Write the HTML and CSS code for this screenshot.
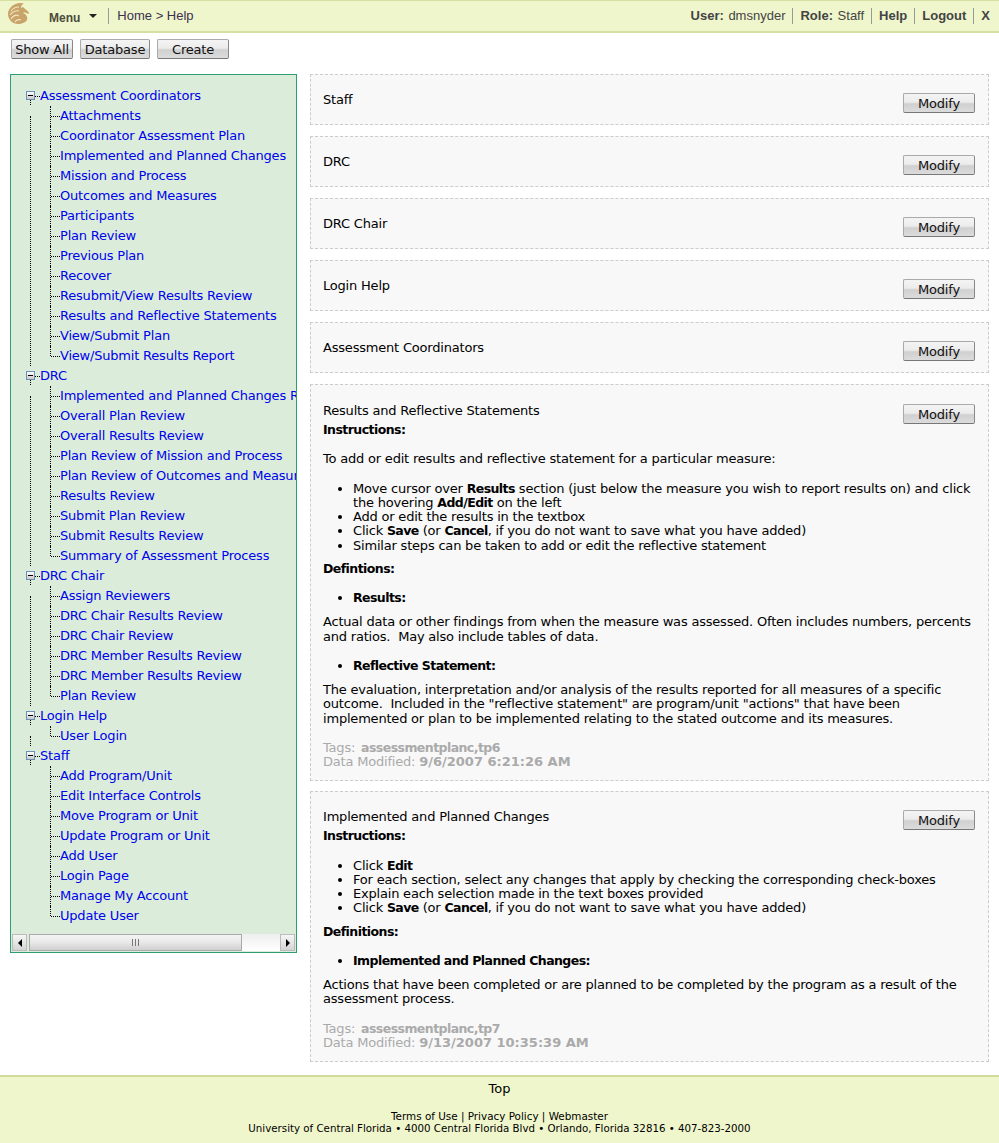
FILE: index.html
```html
<!DOCTYPE html>
<html lang="en">
<head>
  <meta charset="UTF-8">
  <meta name="viewport" content="width=device-width, initial-scale=1.0">
  <title>Help</title>
  <link rel="stylesheet" href="styles.css">
</head>
<body>
  <header class="topbar">
    <div class="topbar-left">
      <svg class="logo" width="21" height="21" viewBox="0 0 21 21">
        <path d="M12 0C6 0 0 5 0 11c0 6 5 10 10 10 4 0 8-2 9-4 1-3-1-6-4-7 1-1 2-1 3 0l3 1c0-2-2-4-4-5-1-2-3-2-4-1 0-2 1-4 3-4-1-1-3-1-4-1z" fill="#c8a468"/>
        <path d="M3 8c2-3 5-4 8-4M2 12c2-3 6-5 9-4M3 16c2-3 5-5 8-3M7 19c1-2 4-3 6-2" fill="none" stroke="#f0e4c4" stroke-width="1.1"/>
      </svg>
      <span class="menu">Menu</span>
      <span class="menu-arrow"></span>
      <span class="crumbs">Home &gt; Help</span>
    </div>
    <div class="topbar-right">
      <span class="top-item"><b>User:</b> dmsnyder</span>
      <span class="top-item"><b>Role:</b> Staff</span>
      <span class="top-item"><b>Help</b></span>
      <span class="top-item"><b>Logout</b></span>
      <span class="top-item"><b>X</b></span>
    </div>
  </header>

  <div class="toolbar">
    <button class="btn btn-showall">Show All</button>
    <button class="btn btn-database">Database</button>
    <button class="btn btn-create">Create</button>
  </div>

  <main class="content">
    <nav class="side">
      <div class="tree-scroll">
        <ul class="tree">
          <li class="root"><span class="toggle"></span><a>Assessment Coordinators</a>
            <ul>
              <li><a>Attachments</a></li>
              <li><a>Coordinator Assessment Plan</a></li>
              <li><a>Implemented and Planned Changes</a></li>
              <li><a>Mission and Process</a></li>
              <li><a>Outcomes and Measures</a></li>
              <li><a>Participants</a></li>
              <li><a>Plan Review</a></li>
              <li><a>Previous Plan</a></li>
              <li><a>Recover</a></li>
              <li><a>Resubmit/View Results Review</a></li>
              <li><a>Results and Reflective Statements</a></li>
              <li><a>View/Submit Plan</a></li>
              <li><a>View/Submit Results Report</a></li>
            </ul>
          </li>
          <li class="root"><span class="toggle"></span><a>DRC</a>
            <ul>
              <li><a>Implemented and Planned Changes Review</a></li>
              <li><a>Overall Plan Review</a></li>
              <li><a>Overall Results Review</a></li>
              <li><a>Plan Review of Mission and Process</a></li>
              <li><a>Plan Review of Outcomes and Measures</a></li>
              <li><a>Results Review</a></li>
              <li><a>Submit Plan Review</a></li>
              <li><a>Submit Results Review</a></li>
              <li><a>Summary of Assessment Process</a></li>
            </ul>
          </li>
          <li class="root"><span class="toggle"></span><a>DRC Chair</a>
            <ul>
              <li><a>Assign Reviewers</a></li>
              <li><a>DRC Chair Results Review</a></li>
              <li><a>DRC Chair Review</a></li>
              <li><a>DRC Member Results Review</a></li>
              <li><a>DRC Member Results Review</a></li>
              <li><a>Plan Review</a></li>
            </ul>
          </li>
          <li class="root"><span class="toggle"></span><a>Login Help</a>
            <ul>
              <li><a>User Login</a></li>
            </ul>
          </li>
          <li class="root"><span class="toggle"></span><a>Staff</a>
            <ul>
              <li><a>Add Program/Unit</a></li>
              <li><a>Edit Interface Controls</a></li>
              <li><a>Move Program or Unit</a></li>
              <li><a>Update Program or Unit</a></li>
              <li><a>Add User</a></li>
              <li><a>Login Page</a></li>
              <li><a>Manage My Account</a></li>
              <li><a>Update User</a></li>
            </ul>
          </li>
        </ul>
      </div>
      <div class="hscroll">
        <span class="sb-btn"><span class="arrow-left"></span></span>
        <span class="sb-thumb"><span class="grip"></span></span>
        <span class="sb-track"></span>
        <span class="sb-btn"><span class="arrow-right"></span></span>
      </div>
    </nav>

    <section class="cards">
      <article class="card card-short"><button class="btn btn-modify">Modify</button><div class="card-title">Staff</div></article>
      <article class="card card-short"><button class="btn btn-modify">Modify</button><div class="card-title">DRC</div></article>
      <article class="card card-short"><button class="btn btn-modify">Modify</button><div class="card-title">DRC Chair</div></article>
      <article class="card card-short"><button class="btn btn-modify">Modify</button><div class="card-title">Login Help</div></article>
      <article class="card card-short"><button class="btn btn-modify">Modify</button><div class="card-title">Assessment Coordinators</div></article>

      <article class="card card-long">
        <button class="btn btn-modify">Modify</button>
        <div class="card-title">Results and Reflective Statements</div>
        <p><b>Instructions:</b></p>
        <p class="gap">To add or edit results and reflective statement for a particular measure:</p>
        <ul class="list list-steps">
          <li>Move cursor over <b>Results</b> section (just below the measure you wish to report results on) and click the hovering <b>Add/Edit</b> on the left</li>
          <li>Add or edit the results in the textbox</li>
          <li>Click <b>Save</b> (or <b>Cancel</b>, if you do not want to save what you have added)</li>
          <li>Similar steps can be taken to add or edit the reflective statement</li>
        </ul>
        <p><b>Defintions:</b></p>
        <ul class="list">
          <li><b>Results:</b></li>
        </ul>
        <p>Actual data or other findings from when the measure was assessed. Often includes numbers, percents and ratios.&nbsp; May also include tables of data.</p>
        <ul class="list">
          <li><b>Reflective Statement:</b></li>
        </ul>
        <p>The evaluation, interpretation and/or analysis of the results reported for all measures of a specific outcome.&nbsp; Included in the "reflective statement" are program/unit "actions" that have been implemented or plan to be implemented relating to the stated outcome and its measures.</p>
        <div class="meta">Tags: <b class="tag">assessmentplanc,tp6</b><br>Data Modified: <b class="date">9/6/2007 6:21:26 AM</b></div>
      </article>

      <article class="card card-long card-changes">
        <button class="btn btn-modify">Modify</button>
        <div class="card-title">Implemented and Planned Changes</div>
        <p><b>Instructions:</b></p>
        <ul class="list list-steps">
          <li>Click <b>Edit</b></li>
          <li>For each section, select any changes that apply by checking the corresponding check-boxes</li>
          <li>Explain each selection made in the text boxes provided</li>
          <li>Click <b>Save</b> (or <b>Cancel</b>, if you do not want to save what you have added)</li>
        </ul>
        <p><b>Definitions:</b></p>
        <ul class="list">
          <li><b>Implemented and Planned Changes:</b></li>
        </ul>
        <p>Actions that have been completed or are planned to be completed by the program as a result of the assessment process.</p>
        <div class="meta">Tags: <b class="tag">assessmentplanc,tp7</b><br>Data Modified: <b class="date">9/13/2007 10:35:39 AM</b></div>
      </article>
    </section>
  </main>

  <footer class="footer">
    <div class="top-link">Top</div>
    <div class="footer-links">Terms of Use | Privacy Policy | Webmaster</div>
    <div class="footer-addr">University of Central Florida &bull; 4000 Central Florida Blvd &bull; Orlando, Florida 32816 &bull; 407-823-2000</div>
  </footer>
</body>
</html>
```

FILE: styles.css
```css
body {
  margin: 0;
  font-family: "DejaVu Sans", Verdana, sans-serif;
  font-size: 12px;
  color: #000;
  background: #fff;
}

.topbar {
  display: flex;
  justify-content: space-between;
  height: 30px;
  background: #eff6cc;
  border-top: 1px solid #d6e0a0;
  border-bottom: 2px solid #d6e0a0;
  font-family: "Liberation Sans", Arial, sans-serif;
  font-size: 13px;
  color: #444;
}

.topbar-left {
  display: flex;
  align-items: center;
}

.logo {
  margin: 0 0 6px 8px;
}

.menu {
  margin: 3px 0 0 20px;
  font-size: 12px;
  font-weight: bold;
  color: #4a4a3a;
}

.menu-arrow {
  width: 0;
  height: 0;
  margin-left: 9px;
  border-left: 4px solid transparent;
  border-right: 4px solid transparent;
  border-top: 4px solid #222;
}

.crumbs {
  margin-left: 11px;
  padding-left: 8px;
  border-left: 1px solid #999;
  line-height: 16px;
  color: #3c2f50;
}

.topbar-right {
  display: flex;
  align-items: center;
  padding-right: 2px;
}

.top-item {
  padding: 0 7px;
  border-left: 1px solid #999;
  line-height: 16px;
  word-spacing: 1px;
}

.top-item:first-child {
  border-left: none;
}

.toolbar {
  display: flex;
  gap: 7px;
  padding: 6px 0 0 11px;
}

.btn {
  height: 20px;
  padding: 0;
  font-family: "DejaVu Sans", Verdana, sans-serif;
  font-size: 13px;
  letter-spacing: -0.2px;
  color: #111;
  background: linear-gradient(#f4f4f4, #ececec 45%, #d0d0d0 55%, #dcdcdc);
  border: 1px solid #aaa;
  border-right-color: #888;
  border-bottom-color: #777;
  border-radius: 2px;
}

.btn-showall {
  width: 62px;
}

.btn-database {
  width: 70px;
}

.btn-create {
  width: 72px;
}

.btn-modify {
  float: right;
  width: 72px;
  margin: 18px 13px 0 0;
}

.content {
  display: flex;
  align-items: flex-start;
  gap: 13px;
  padding: 15px 10px 0;
}

.side {
  flex: none;
  width: 285px;
  background: #dbedda;
  border: 1px solid #2f9e6e;
}

.tree-scroll {
  height: 858px;
  overflow: hidden;
}

.tree,
.tree ul {
  margin: 0;
  padding: 0;
  list-style: none;
}

.tree {
  padding: 11px 0 0 15px;
  white-space: nowrap;
}

.tree li {
  position: relative;
  line-height: 20px;
}

.tree a {
  color: #00e;
  font-size: 13px;
  letter-spacing: -0.2px;
}

.tree ul li {
  padding-left: 20px;
}

/* dotted guide line and stub of a child row */
.tree ul li::before {
  content: "";
  position: absolute;
  left: 10px;
  top: 0;
  height: 100%;
  border-left: 1px dotted #000;
}

.tree ul li:last-child::before {
  height: 10px;
}

.tree ul li::after {
  content: "";
  position: absolute;
  left: 11px;
  top: 10px;
  width: 9px;
  border-top: 1px dotted #000;
}

.root {
  padding-left: 14px;
}

/* guide line of a root row starts one row below it, as the tree tiles do */
.root::before {
  content: "";
  position: absolute;
  left: 4px;
  top: 30px;
  bottom: 0;
  border-left: 1px dotted #000;
}

.root:last-child::before {
  display: none;
}

.root > a::before {
  content: "";
  position: absolute;
  left: 9px;
  top: 10px;
  width: 5px;
  border-top: 1px dotted #000;
}

.toggle {
  position: absolute;
  left: 0;
  top: 5px;
  width: 7px;
  height: 7px;
  background: linear-gradient(#fff, #c8c8c8);
  border: 1px solid #6d8fb5;
}

.toggle::before {
  content: "";
  position: absolute;
  left: 1px;
  top: 3px;
  width: 5px;
  height: 1px;
  background: #000;
}

.toggle::after {
  content: "";
  position: absolute;
  left: 3px;
  top: 8px;
  height: 5px;
  border-left: 1px dotted #000;
}

.hscroll {
  display: flex;
  height: 17px;
  margin: 1px;
}

.sb-btn {
  display: flex;
  align-items: center;
  justify-content: center;
  width: 15px;
  background: linear-gradient(#f6f6f6, #d4d4d4);
  border: 1px solid #bbb;
  box-sizing: border-box;
}

.sb-thumb {
  display: flex;
  align-items: center;
  justify-content: center;
  width: 213px;
  margin-left: 2px;
  background: linear-gradient(#f4f4f4, #e8e8e8 50%, #cfcfcf);
  border: 1px solid #aaa;
  box-sizing: border-box;
}

.sb-track {
  flex: 1;
  background: linear-gradient(#eee, #fff);
}

.grip {
  width: 7px;
  height: 7px;
  background: repeating-linear-gradient(90deg, #777 0 1px, transparent 1px 3px);
}

.arrow-left,
.arrow-right {
  width: 0;
  height: 0;
  border-top: 4px solid transparent;
  border-bottom: 4px solid transparent;
}

.arrow-left {
  border-right: 4px solid #000;
}

.arrow-right {
  border-left: 4px solid #000;
}

.cards {
  display: flex;
  flex-direction: column;
  gap: 11px;
  flex: 1;
  min-width: 0;
}

.card {
  padding: 0 0 11px 12px;
  background: #f8f8f8;
  border: 1px dashed #ccc;
  line-height: 14.25px;
  font-size: 13px;
  letter-spacing: -0.2px;
}

.card b {
  font-size: 12.5px;
  letter-spacing: -0.56px;
}

.card-short {
  height: 49px;
  padding-bottom: 0;
}

.card-title {
  padding-top: 18px;
  line-height: 14px;
}

.card-long .card-title {
  padding-top: 19px;
}

.card-long .btn-modify {
  margin-top: 19px;
}

.card-changes {
  margin-top: -1px;
}

.card-changes .card-title {
  padding-top: 18px;
}

.card-changes .btn-modify {
  margin-top: 18px;
}

.card p {
  margin: 5px 13px 15px 0;
}

.card .gap {
  margin-top: 0;
}

.list {
  margin: 0 13px 10px 0;
  padding-left: 30px;
}

.list-steps {
  margin-bottom: 9px;
}

.meta {
  margin-top: 14px;
  color: #aaa;
}

.card .meta .tag {
  margin-left: 2px;
}

.card .meta .date {
  font-size: 13px;
  letter-spacing: 0;
}

.footer {
  margin-top: 13px;
  height: 66px;
  text-align: center;
  background: #eff6cc;
  border-top: 2px solid #cfdb9a;
}

.top-link {
  padding-top: 4px;
  line-height: 16px;
  font-size: 13px;
}

.footer-links {
  margin-top: 13px;
  line-height: 12px;
  font-size: 10.4px;
}

.footer-addr {
  line-height: 12px;
  font-size: 10.25px;
}
```
